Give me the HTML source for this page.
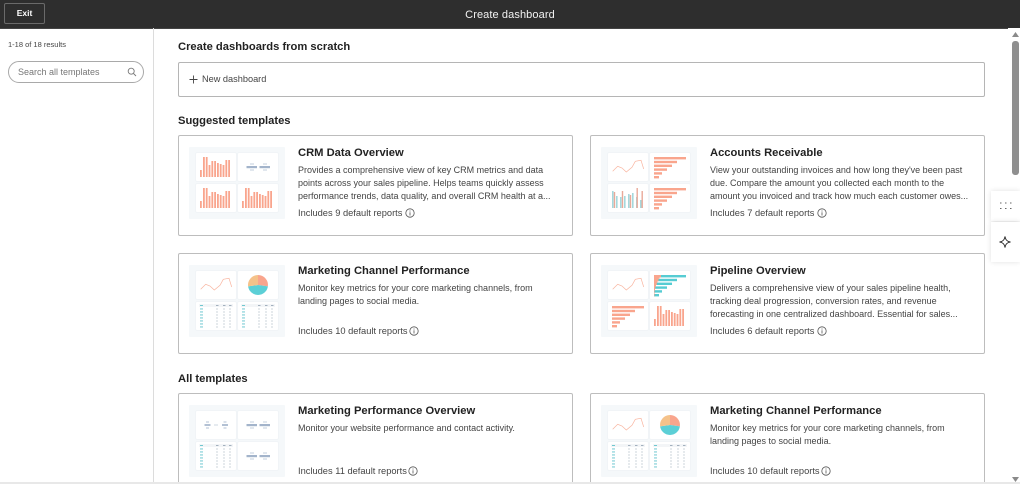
<!DOCTYPE html>
<html lang="en"><head><meta charset="utf-8"><title>Create dashboard</title>
<style>
*{box-sizing:border-box}
html,body{margin:0;width:1020px;height:484px;overflow:hidden;background:#fff}
#page{position:relative;width:1020px;height:484px;overflow:hidden;background:#fff;font-family:"Liberation Sans",sans-serif;color:#33475b;filter:blur(.3px)}
.abs{position:absolute}
#hdr{left:0;top:0;width:1020px;height:29px;background:#2e2e2e;border-bottom:1px solid #444}
#exit{left:4px;top:3px;width:41px;height:21px;border:1px solid #6a6a6a;border-radius:2px;color:#fff;font-weight:700;font-size:8.5px;text-align:center;line-height:19px}
#ttl{left:0;top:6.500px;width:1020px;text-align:center;color:#f2f2f2;font-size:11px;line-height:16px;letter-spacing:.1px}
#side{left:153px;top:28px;width:1px;height:456px;background:#dcdcdc}
#res{left:8px;top:38.500px;font-size:7.5px;line-height:11px;color:#444}
#search{left:8px;top:61px;width:136px;height:22px;border:1px solid #a9a9a9;border-radius:11px;font-size:9px;line-height:21px;color:#777;padding-left:9px}
h2{position:absolute;margin:0;font-size:11.2px;line-height:15px;font-weight:700;color:#222}
#new{left:178px;top:62px;width:807px;height:35px;border:1px solid #b5b5b5;border-radius:2px;font-size:9.2px;line-height:33px;color:#444;padding-left:23px}
.card{position:absolute;width:395px;height:101px;border:1px solid #bdbdbd;border-radius:2px;background:#fff}
.card svg.th{position:absolute;left:10px;top:11px;width:96px;height:72px}
.card b{position:absolute;left:119px;top:9.500px;font-size:11.2px;line-height:15px;color:#222;white-space:nowrap}
.card p{position:absolute;left:119px;top:27.500px;margin:0;width:262px;font-size:9px;line-height:13px;color:#444;white-space:nowrap}
.card span{position:absolute;left:119px;top:70.500px;font-size:9.3px;line-height:13px;color:#444;white-space:nowrap}
.card span svg{position:absolute;top:1.500px;width:10px;height:10px}
#sb{left:1008px;top:28px;width:12px;height:456px;background:#fff}
#thumb{left:1012px;top:41px;width:7px;height:134px;background:#8f8f8f;border-radius:3px}
.tool{left:991px;width:29px;background:#fff;box-shadow:0 0 5px rgba(0,0,0,.12)}
</style></head><body>
<div id="page">
<svg width="0" height="0" style="position:absolute"><defs>
<g id="tile"><rect x="-.5" y="-.5" width="41" height="29" rx="1" fill="#edf1f4"/><rect width="40" height="28" rx="1" fill="#fff"/></g>
<g id="bars"><use href="#tile"/><g fill="#f9a58d"><rect x="4" y="17" width="1.800" height="7"/><rect x="7" y="4" width="1.800" height="20"/><rect x="9.800" y="4" width="1.800" height="20"/><rect x="12.600" y="12" width="1.800" height="12"/><rect x="15.400" y="8" width="1.800" height="16"/><rect x="18.200" y="8" width="1.800" height="16"/><rect x="21" y="10" width="1.800" height="14"/><rect x="23.800" y="11" width="1.800" height="13"/><rect x="26.600" y="12" width="1.800" height="12"/><rect x="29.400" y="7" width="1.800" height="17"/><rect x="32.200" y="7" width="1.800" height="17"/></g></g>
<g id="kpi2"><use href="#tile"/><g fill="#a3b4cb"><rect x="8.500" y="13" width="10.500" height="2.200"/><rect x="21.500" y="13" width="10.500" height="2.200"/></g><g fill="#c3cfdc"><rect x="12" y="10.500" width="4" height="1"/><rect x="25" y="10.500" width="4" height="1"/><rect x="12" y="16.500" width="4" height="1"/><rect x="25" y="16.500" width="4" height="1"/></g></g>
<g id="kpi3"><use href="#tile"/><g fill="#b3c1d4"><rect x="8.500" y="13" width="6" height="2"/><rect x="26" y="13" width="6" height="2"/><rect x="10" y="10.500" width="3" height="1"/><rect x="27.500" y="10.500" width="3" height="1"/><rect x="10" y="16.500" width="3" height="1"/><rect x="27.500" y="16.500" width="3" height="1"/></g><rect x="18" y="13" width="4" height="2" fill="#e6ebf0"/></g>
<g id="line"><use href="#tile"/><path d="M4.700 18.300L9.700 13.300L14 15L18.300 19L24 14.300L27.300 8.300L33 7.300L35.700 16" fill="none" stroke="#f9b5a0" stroke-width=".7"/></g>
<g id="hbars"><use href="#tile"/><g fill="#f9a58d"><rect x="4" y="4" width="32" height="2.400"/><rect x="4" y="7.800" width="23" height="2.400"/><rect x="4" y="11.600" width="18" height="2.400"/><rect x="4" y="15.400" width="13" height="2.400"/><rect x="4" y="19.200" width="8" height="2.400"/><rect x="4" y="23" width="5" height="2.400"/></g></g>
<g id="hbars2"><use href="#tile"/><g fill="#56ccd3"><rect x="4" y="4" width="32" height="2.400"/><rect x="4" y="7.800" width="23" height="2.400"/><rect x="4" y="11.600" width="18" height="2.400"/><rect x="4" y="15.400" width="13" height="2.400"/><rect x="4" y="19.200" width="8" height="2.400"/><rect x="4" y="23" width="5" height="2.400"/></g><path d="M4 4h7v2.400H9.500v1.400H8.500v2.400H7.500v1.400H6.800v2.400H6v1.400H5.400v2.400H5v1.400H4.500V25.400H4z" fill="#f9a58d"/></g>
<g id="cbars"><use href="#tile"/><g fill="#a5d8dc"><rect x="4" y="7" width="1.600" height="17"/><rect x="8" y="12" width="1.600" height="12"/><rect x="12" y="13" width="1.600" height="11"/><rect x="16" y="12" width="1.600" height="12"/><rect x="20" y="10" width="1.600" height="14"/><rect x="24" y="9" width="1.600" height="15"/><rect x="28" y="13" width="1.600" height="11"/><rect x="32" y="16" width="1.600" height="8"/></g><g fill="#e9a999"><rect x="5.800" y="8" width="1.400" height="16"/><rect x="13.800" y="7" width="1.400" height="17"/><rect x="21.800" y="11" width="1.400" height="13"/><rect x="28.500" y="4" width="1.400" height="20"/><rect x="33.500" y="7" width="1.400" height="17"/></g></g>
<g id="pie"><use href="#tile"/><path d="M20 14L20 4a10 10 0 0 1 9.900 11.400z" fill="#f9a58d"/><path d="M20 14L29.900 15.400a10 10 0 0 1-19.800 0z" fill="#5ccfd6"/><path d="M20 14L10.100 15.400A10 10 0 0 1 20 4z" fill="#f5c28a"/></g>
<g id="tbl"><use href="#tile"/><rect x="3" y="2" width="34" height="3" fill="#f3f5f7"/><g fill="#62c3cc"><rect x="4" y="3" width="3" height=".9"/><rect x="4" y="6.500" width="3" height=".9"/><rect x="4" y="9.500" width="3" height=".9"/><rect x="4" y="12.500" width="3" height=".9"/><rect x="4" y="15.500" width="3" height=".9"/><rect x="4" y="18.500" width="3" height=".9"/><rect x="4" y="21.500" width="3" height=".9"/><rect x="4" y="24.500" width="3" height=".9"/></g><g fill="#9aa9b8"><rect x="20" y="3" width="2.500" height=".9"/><rect x="27" y="3" width="2.500" height=".9"/><rect x="33" y="3" width="2.500" height=".9"/><path d="M20.500 6.500h1v1h-1zM27.500 6.500h1v1h-1zM33.500 6.500h1v1h-1zM20.500 9.500h1v1h-1zM27.500 9.500h1v1h-1zM33.500 9.500h1v1h-1zM20.500 12.500h1v1h-1zM27.500 12.500h1v1h-1zM33.500 12.500h1v1h-1zM20.500 15.500h1v1h-1zM27.500 15.500h1v1h-1zM33.500 15.500h1v1h-1zM20.500 18.500h1v1h-1zM27.500 18.500h1v1h-1zM33.500 18.500h1v1h-1zM20.500 21.500h1v1h-1zM27.500 21.500h1v1h-1zM33.500 21.500h1v1h-1zM20.500 24.500h1v1h-1zM27.500 24.500h1v1h-1zM33.500 24.500h1v1h-1z"/></g></g>
<g id="info"><circle cx="5" cy="5" r="4.200" fill="none" stroke="#555" stroke-width=".8"/><rect x="4.600" y="4.300" width=".8" height="3.200" fill="#555"/><rect x="4.600" y="2.500" width=".8" height="1" fill="#555"/></g>
</defs></svg>

<div id="hdr" class="abs"></div>
<div id="exit" class="abs">Exit</div>
<div id="ttl" class="abs">Create dashboard</div>
<div id="side" class="abs"></div>
<div id="res" class="abs">1-18 of 18 results</div>
<div id="search" class="abs">Search all templates
<svg class="abs" style="left:118px;top:5px" width="10" height="10" viewBox="0 0 10 10"><circle cx="4.200" cy="4.200" r="3" fill="none" stroke="#777" stroke-width=".9"/><path d="M6.500 6.500L9 9" stroke="#777" stroke-width=".9"/></svg></div>

<h2 style="left:178px;top:39.500px">Create dashboards from scratch</h2>
<div id="new" class="abs">New dashboard
<svg class="abs" style="left:10px;top:12px" width="9" height="9" viewBox="0 0 9 9"><path d="M4.500 .5v8M.5 4.500h8" stroke="#444" stroke-width=".9"/></svg></div>
<h2 style="left:178px;top:113.500px">Suggested templates</h2>
<h2 style="left:178px;top:371.500px">All templates</h2>

<div class="card" style="left:178px;top:135px">
<svg class="th" viewBox="0 0 96 72"><rect width="96" height="72" rx="1" fill="#f5f8fa"/><use href="#bars" x="7" y="6"/><use href="#kpi2" x="49" y="6"/><use href="#bars" x="7" y="37"/><use href="#bars" x="49" y="37"/></svg>
<b>CRM Data Overview</b>
<p>Provides a comprehensive view of key CRM metrics and data<br>points across your sales pipeline. Helps teams quickly assess<br>performance trends, data quality, and overall CRM health at a...</p>
<span>Includes 9 default reports<svg style="left:107px" viewBox="0 0 10 10"><use href="#info"/></svg></span></div>

<div class="card" style="left:590px;top:135px">
<svg class="th" viewBox="0 0 96 72"><rect width="96" height="72" rx="1" fill="#f5f8fa"/><use href="#line" x="7" y="6"/><use href="#hbars" x="49" y="6"/><use href="#cbars" x="7" y="37"/><use href="#hbars" x="49" y="37"/></svg>
<b>Accounts Receivable</b>
<p>View your outstanding invoices and how long they've been past<br>due. Compare the amount you collected each month to the<br>amount you invoiced and track how much each customer owes...</p>
<span>Includes 7 default reports<svg style="left:107px" viewBox="0 0 10 10"><use href="#info"/></svg></span></div>

<div class="card" style="left:178px;top:253px">
<svg class="th" viewBox="0 0 96 72"><rect width="96" height="72" rx="1" fill="#f5f8fa"/><use href="#line" x="7" y="6"/><use href="#pie" x="49" y="6"/><use href="#tbl" x="7" y="37"/><use href="#tbl" x="49" y="37"/></svg>
<b>Marketing Channel Performance</b>
<p>Monitor key metrics for your core marketing channels, from<br>landing pages to social media.</p>
<span>Includes 10 default reports<svg style="left:111px" viewBox="0 0 10 10"><use href="#info"/></svg></span></div>

<div class="card" style="left:590px;top:253px">
<svg class="th" viewBox="0 0 96 72"><rect width="96" height="72" rx="1" fill="#f5f8fa"/><use href="#line" x="7" y="6"/><use href="#hbars2" x="49" y="6"/><use href="#hbars" x="7" y="37"/><use href="#bars" x="49" y="37"/></svg>
<b>Pipeline Overview</b>
<p>Delivers a comprehensive view of your sales pipeline health,<br>tracking deal progression, conversion rates, and revenue<br>forecasting in one centralized dashboard. Essential for sales...</p>
<span>Includes 6 default reports<svg style="left:107px" viewBox="0 0 10 10"><use href="#info"/></svg></span></div>

<div class="card" style="left:178px;top:393px">
<svg class="th" viewBox="0 0 96 72"><rect width="96" height="72" rx="1" fill="#f5f8fa"/><use href="#kpi3" x="7" y="6"/><use href="#kpi2" x="49" y="6"/><use href="#tbl" x="7" y="37"/><use href="#kpi2" x="49" y="37"/></svg>
<b>Marketing Performance Overview</b>
<p>Monitor your website performance and contact activity.</p>
<span>Includes 11 default reports<svg style="left:110px" viewBox="0 0 10 10"><use href="#info"/></svg></span></div>

<div class="card" style="left:590px;top:393px">
<svg class="th" viewBox="0 0 96 72"><rect width="96" height="72" rx="1" fill="#f5f8fa"/><use href="#line" x="7" y="6"/><use href="#pie" x="49" y="6"/><use href="#tbl" x="7" y="37"/><use href="#tbl" x="49" y="37"/></svg>
<b>Marketing Channel Performance</b>
<p>Monitor key metrics for your core marketing channels, from<br>landing pages to social media.</p>
<span>Includes 10 default reports<svg style="left:111px" viewBox="0 0 10 10"><use href="#info"/></svg></span></div>

<div id="sb" class="abs"></div>
<div id="thumb" class="abs"></div>
<svg class="abs" style="left:1012px;top:32px" width="7" height="5"><path d="M3.500 0L7 5H0z" fill="#8a8a8a"/></svg>
<svg class="abs" style="left:1012px;top:477px" width="7" height="5"><path d="M0 0H7L3.500 5z" fill="#8a8a8a"/></svg>

<div class="abs tool" style="top:191px;height:30px"></div>
<div class="abs tool" style="top:222px;height:40px"></div>
<svg class="abs" style="left:1000px;top:201px" width="12" height="10" viewBox="0 0 12 10"><path d="M0 1.500h1.500v1H0zM5 1.500h1.500v1H5zM10 1.500h1.500v1H10zM0 7h1.500v1H0zM5 7h1.500v1H5zM10 7h1.500v1H10z" fill="#666"/></svg>
<svg class="abs" style="left:999px;top:236px" width="12" height="12" viewBox="0 0 12 12"><path d="M6 .5C6.500 4 8 5.500 11.500 6 8 6.500 6.500 8 6 11.500 5.500 8 4 6.500 .5 6 4 5.500 5.500 4 6 .5z" fill="none" stroke="#333" stroke-width="1"/></svg>

<div class="abs" style="left:0;top:482px;width:1020px;height:2px;background:#e8e8e8"></div>
</div>
</body></html>
